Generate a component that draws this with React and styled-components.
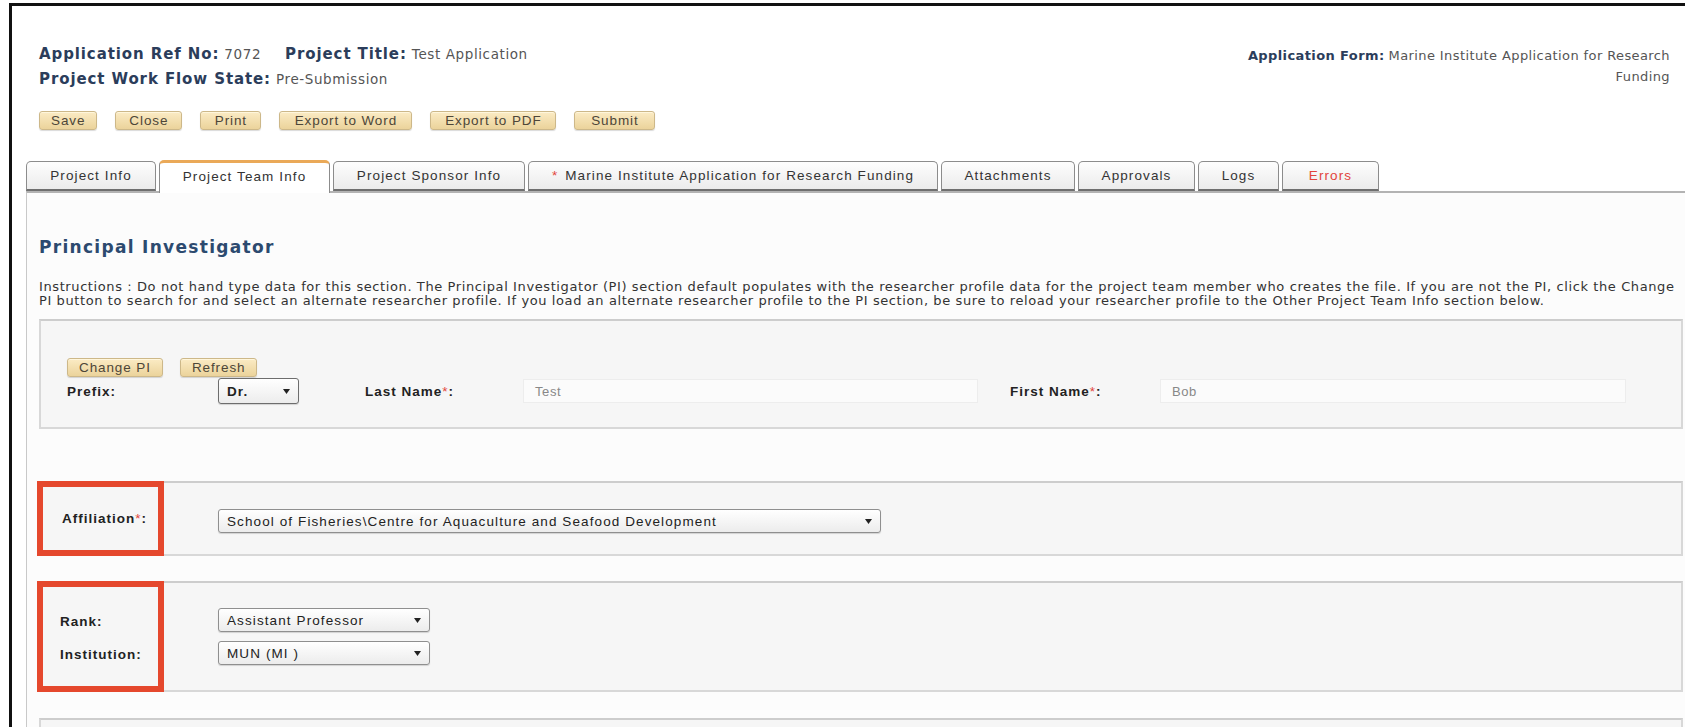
import styled, { createGlobalStyle } from 'styled-components';

const GlobalStyle = createGlobalStyle`
  html, body {
    margin: 0;
    padding: 0;
    background: #fff;
  }
  body {
    font-family: "Liberation Sans", Arial, sans-serif;
    color: #333;
    overflow: hidden;
  }
`;

const Frame = styled.div`
  margin: 3px 0 0 9px;
  height: calc(100vh - 3px);
  border-top: 3px solid #111;
  border-left: 3px solid #111;
  background: #fff;
  display: flex;
  flex-direction: column;
`;

const Header = styled.header`
  display: flex;
  justify-content: space-between;
  align-items: flex-start;
  padding: 36px 15px 0 27px;
`;

const MetaLine = styled.div`
  font: bold 15px/25px "DejaVu Sans", Verdana, sans-serif;
  letter-spacing: 0.9px;
  color: #2b3d5b;
  white-space: nowrap;
`;

const MetaGroup = styled.span`
  & + & {
    margin-left: 24px;
  }
`;

const MetaValue = styled.span`
  font: 13.5px "DejaVu Sans", Verdana, sans-serif;
  letter-spacing: 0.6px;
  color: #555;
  margin-left: 5px;
`;

const FormInfo = styled.div`
  width: 440px;
  margin-top: 3px;
  text-align: right;
  font: 13px/21px "DejaVu Sans", Verdana, sans-serif;
  letter-spacing: 0.4px;
  color: #555;

  b {
    color: #2b3d5b;
    margin-right: 4px;
  }
`;

const ButtonBar = styled.div`
  display: flex;
  gap: ${p => p.$gap || 18}px;
  padding: ${p => p.$pad || '19px 0 0 27px'};
`;

const TanButton = styled.button`
  min-width: ${p => p.$w || 0}px;
  height: 19px;
  padding: 0 11px;
  font: 13.5px/17px "Liberation Sans", Arial, sans-serif;
  letter-spacing: 0.9px;
  color: #4d4638;
  background: linear-gradient(#fbebc4, #ebd39b);
  border: 1px solid #cdb889;
  border-radius: 3px;
  box-shadow: inset 0 1px 0 #fff6dc, 0 1px 1px rgba(0, 0, 0, 0.15);
  cursor: pointer;
`;

const TabStrip = styled.nav`
  display: flex;
  align-items: flex-end;
  gap: 3px;
  padding: 30px 0 0 14px;
`;

const Tab = styled.div`
  width: ${p => p.$w}px;
  height: ${p => (p.$active ? 33 : 30)}px;
  box-sizing: border-box;
  display: flex;
  align-items: center;
  justify-content: center;
  padding-bottom: ${p => (p.$active ? 4 : 0)}px;
  font-size: 13.5px;
  letter-spacing: 1.1px;
  color: ${p => (p.$error ? '#e2443c' : '#333')};
  border: 1px solid #8c8c8c;
  border-bottom: ${p => (p.$active ? 'none' : '2px solid #6f6f6f')};
  border-top: ${p => (p.$active ? '3px solid #eaa958' : '1px solid #8c8c8c')};
  border-radius: 5px 5px 0 0;
  background: ${p => (p.$active ? '#fff' : 'linear-gradient(#fdfdfd, #ececec)')};
  margin-bottom: ${p => (p.$active ? '-2px' : '0')};
  position: relative;
  z-index: ${p => (p.$active ? 1 : 0)};
`;

const Star = styled.span`
  color: #e2443c;
  margin-right: 7px;
`;

const Panel = styled.section`
  flex: 1;
  margin-left: 14px;
  border-left: 1px solid #c9c9c9;
  border-top: 2px solid #b3b3b3;
  background: #fcfcfc;
  padding: 0 2px 0 12px;
`;

const Heading = styled.h2`
  margin: 44px 0 0;
  font: bold 17px/20px "DejaVu Sans", Verdana, sans-serif;
  letter-spacing: 1.3px;
  color: #2c4a6f;
`;

const Instructions = styled.p`
  margin: 23px 0 0;
  padding-right: 6px;
  font: 13px/13.5px "DejaVu Sans", Verdana, sans-serif;
  letter-spacing: 0.6px;
  color: #333;
`;

const Box = styled.div`
  margin-top: ${p => p.$top}px;
  min-height: ${p => p.$h}px;
  box-sizing: border-box;
  border: 2px solid #d8d8d8;
  border-top-color: #cdcdcd;
  background: #f6f6f6;
  display: flex;
  align-items: stretch;
`;

const BoxBody = styled.div`
  flex: 1;
  padding: ${p => p.$pad};
  display: flex;
  flex-direction: column;
  gap: ${p => p.$gap || 0}px;
`;

const LabelCell = styled.div`
  width: 127px;
  box-sizing: border-box;
  margin: -2px 0 -2px -4px;
  padding: ${p => p.$pad};
  border: 6px solid #e5482d;
  display: flex;
  flex-direction: column;
  gap: ${p => p.$gap || 0}px;
`;

const Row = styled.div`
  display: flex;
  align-items: center;
  height: ${p => p.$h || 26}px;
`;

const Label = styled.span`
  width: ${p => p.$w}px;
  flex: none;
  font: bold 13.5px "Liberation Sans", Arial, sans-serif;
  letter-spacing: 1px;
  color: #222;

  em {
    font-style: normal;
    color: #e2443c;
    font-weight: normal;
  }
`;

const SelectBox = styled.div`
  width: ${p => p.$w}px;
  height: ${p => p.$h || 24}px;
  box-sizing: border-box;
  flex: none;
  display: flex;
  align-items: center;
  justify-content: space-between;
  padding: 0 8px 0 8px;
  font: ${p => (p.$bold ? 'bold ' : '')}13.5px "Liberation Sans", Arial, sans-serif;
  letter-spacing: 1.1px;
  color: #222;
  background: linear-gradient(#ffffff, #ececec);
  border: 1px solid ${p => (p.$dark ? '#6d6d6d' : '#8f8f8f')};
  border-radius: 3px;
  box-shadow: 0 1px 1px rgba(0, 0, 0, 0.15);
  white-space: nowrap;
`;

const Arrow = () => (
  <svg width="7" height="5" viewBox="0 0 7 5" style={{ flex: 'none' }}>
    <path d="M0 0h7L3.5 5z" fill="#222" />
  </svg>
);

const TextInput = styled.div`
  width: ${p => p.$w}px;
  height: 24px;
  box-sizing: border-box;
  flex: none;
  display: flex;
  align-items: center;
  padding-left: 11px;
  font: 13px "Liberation Sans", Arial, sans-serif;
  letter-spacing: 0.6px;
  color: #888;
  background: #fbfbfb;
  border: 1px solid #ededed;
`;

const Spacer = styled.div`
  width: ${p => p.$w}px;
  flex: none;
`;

const tabs = [
  { label: 'Project Info', w: 130 },
  { label: 'Project Team Info', w: 171, active: true },
  { label: 'Project Sponsor Info', w: 192 },
  { label: 'Marine Institute Application for Research Funding', w: 410, required: true },
  { label: 'Attachments', w: 134 },
  { label: 'Approvals', w: 117 },
  { label: 'Logs', w: 81 },
  { label: 'Errors', w: 97, error: true },
];

const actions = [
  { label: 'Save', w: 54 },
  { label: 'Close', w: 67 },
  { label: 'Print', w: 61 },
  { label: 'Export to Word', w: 133 },
  { label: 'Export to PDF', w: 126 },
  { label: 'Submit', w: 81 },
];

function Select({ value, ...rest }) {
  return (
    <SelectBox {...rest}>
      <span>{value}</span>
      <Arrow />
    </SelectBox>
  );
}

export default function App() {
  return (
    <>
      <GlobalStyle />
      <Frame>
        <Header>
          <div>
            <MetaLine>
              <MetaGroup>Application Ref No:<MetaValue>7072</MetaValue></MetaGroup>
              <MetaGroup>Project Title:<MetaValue>Test Application</MetaValue></MetaGroup>
            </MetaLine>
            <MetaLine>
              Project Work Flow State:<MetaValue>Pre-Submission</MetaValue>
            </MetaLine>
          </div>
          <FormInfo>
            <b>Application Form:</b>Marine Institute Application for Research Funding
          </FormInfo>
        </Header>

        <ButtonBar>
          {actions.map(a => (
            <TanButton key={a.label} $w={a.w}>{a.label}</TanButton>
          ))}
        </ButtonBar>

        <TabStrip>
          {tabs.map(t => (
            <Tab key={t.label} $w={t.w} $active={t.active} $error={t.error}>
              {t.required && <Star>*</Star>}
              {t.label}
            </Tab>
          ))}
        </TabStrip>

        <Panel>
          <Heading>Principal Investigator</Heading>
          <Instructions>
            Instructions : Do not hand type data for this section. The Principal Investigator (PI) section
            default populates with the researcher profile data for the project team member who creates the
            file. If you are not the PI, click the Change PI button to search for and select an alternate
            researcher profile. If you load an alternate researcher profile to the PI section, be sure to
            reload your researcher profile to the Other Project Team Info section below.
          </Instructions>

          <Box $top={12} $h={110}>
            <BoxBody $pad="37px 0 0 26px" $gap={1}>
              <ButtonBar $pad="0" $gap={17}>
                <TanButton>Change PI</TanButton>
                <TanButton>Refresh</TanButton>
              </ButtonBar>
              <Row>
                <Label $w={151}>Prefix:</Label>
                <Select value="Dr." $w={81} $h={26} $bold $dark />
                <Spacer $w={66} />
                <Label $w={158}>Last Name<em>*</em>:</Label>
                <TextInput $w={455}>Test</TextInput>
                <Spacer $w={32} />
                <Label $w={150}>First Name<em>*</em>:</Label>
                <TextInput $w={466}>Bob</TextInput>
              </Row>
            </BoxBody>
          </Box>

          <Box $top={52} $h={75}>
            <LabelCell $pad="0 0 0 19px">
              <Row $h={63}>
                <Label $w={95}>Affiliation<em>*</em>:</Label>
              </Row>
            </LabelCell>
            <BoxBody $pad="26px 0 0 54px">
              <Select
                value="School of Fisheries\Centre for Aquaculture and Seafood Development"
                $w={663}
              />
            </BoxBody>
          </Box>

          <Box $top={25} $h={111}>
            <LabelCell $pad="22px 0 0 17px" $gap={9}>
              <Row $h={24}>
                <Label $w={95}>Rank:</Label>
              </Row>
              <Row $h={24}>
                <Label $w={95}>Institution:</Label>
              </Row>
            </LabelCell>
            <BoxBody $pad="25px 0 0 54px" $gap={9}>
              <Select value="Assistant Professor" $w={212} />
              <Select value="MUN (MI  )" $w={212} />
            </BoxBody>
          </Box>

          <Box $top={26} $h={80} />
        </Panel>
      </Frame>
    </>
  );
}
